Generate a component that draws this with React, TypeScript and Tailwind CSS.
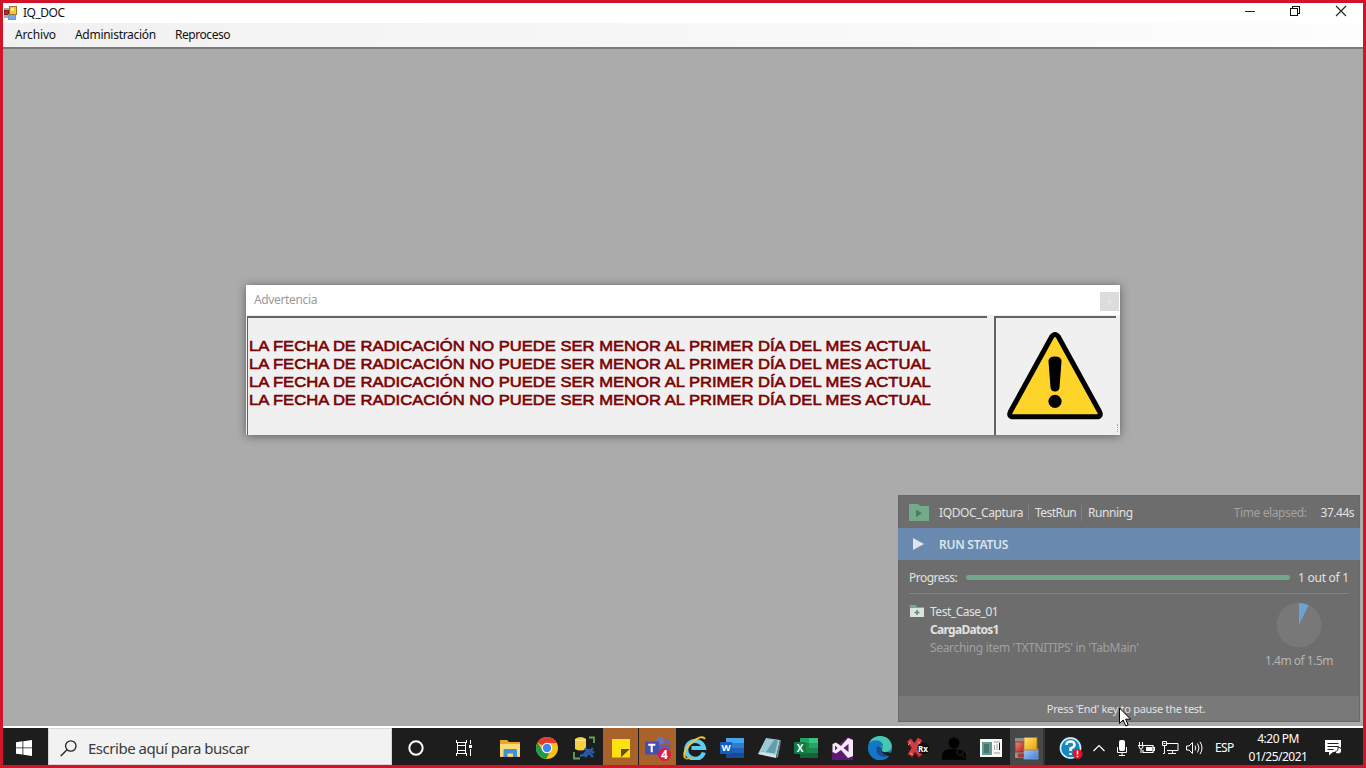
import React from "react";

const warning = "LA FECHA DE RADICACIÓN NO PUEDE SER MENOR AL PRIMER DÍA DEL MES ACTUAL";

function Icon({ children, className = "h-6 w-6" }: { children: React.ReactNode; className?: string }) {
  return (
    <svg viewBox="0 0 24 24" className={`shrink-0 ${className}`} fill="none">
      {children}
    </svg>
  );
}

function AppGlyph({ className }: { className: string }) {
  return (
    <svg viewBox="0 0 24 24" className={`shrink-0 ${className}`}>
      <defs>
        <linearGradient id="gy" x1="0" y1="0" x2="1" y2="1">
          <stop offset="0" stopColor="#ffe373" />
          <stop offset="1" stopColor="#e9a106" />
        </linearGradient>
        <linearGradient id="gr" x1="0" y1="0" x2="1" y2="1">
          <stop offset="0" stopColor="#e98b80" />
          <stop offset="1" stopColor="#b3211d" />
        </linearGradient>
        <linearGradient id="gb" x1="0" y1="0" x2="1" y2="1">
          <stop offset="0" stopColor="#a9cdfb" />
          <stop offset="1" stopColor="#3f7be0" />
        </linearGradient>
      </defs>
      <rect x="0" y="2" width="9" height="20" fill="#8f8f8f" />
      <rect x="0" y="6" width="9" height="10" fill="url(#gr)" stroke="#8c2a25" strokeWidth=".8" />
      <rect x="9" y="13" width="14" height="10" fill="url(#gb)" stroke="#8ba5c9" strokeWidth=".8" />
      <rect x="9" y="1.5" width="13" height="12.5" fill="url(#gy)" stroke="#a87c22" strokeWidth=".8" />
      <rect x="3" y="17.5" width="6" height="4" fill="#b13832" />
    </svg>
  );
}

function TitleBar() {
  return (
    <header className="flex h-5 shrink-0 items-center bg-white">
      <svg viewBox="0 0 14 14" className="h-[14px] w-[14px] shrink-0">
        <rect x="1" y="2" width="5" height="10" fill="#aaa" />
        <rect x="1.5" y="4.5" width="4" height="4" fill="#b92c25" stroke="#7e211d" />
        <rect x="5.5" y="8.500" width="7" height="5" fill="#77a7ee" stroke="#7f95b5" />
        <rect x="6.500" y="0.5" width="7" height="8" fill="#f4c53a" stroke="#9c7a31" />
        <rect x="8" y="2" width="3" height="3" fill="#ffeaa0" />
      </svg>
      <span className="ml-[6px] text-[12px] leading-4 tracking-[-0.5px] text-[#111]">IQ_DOC</span>
      <div className="ml-auto flex items-center gap-[34px] pr-4 pb-[5px]">
        <svg viewBox="0 0 12 12" className="h-3 w-3" fill="none" stroke="#222" shapeRendering="crispEdges">
          <path d="M2 6.5h10" />
        </svg>
        <svg viewBox="0 0 12 12" className="h-3 w-3" fill="none" stroke="#111" shapeRendering="crispEdges">
          <path d="M1.500 3.500h7v7h-7zM3.500 3.500v-2h7v7h-2" />
        </svg>
        <svg viewBox="0 0 12 12" className="h-3 w-3" fill="none" stroke="#222" strokeWidth="1.1">
          <path d="M1 1l10 10M11 1L1 11" />
        </svg>
      </div>
    </header>
  );
}

function MenuBar() {
  return (
    <nav className="flex h-[26px] shrink-0 items-center gap-[19px] border-b-2 border-[#7b7b79] bg-linear-to-r from-[#f1f1f1] to-[#fdfdfd] pl-[12px] text-[12px] leading-4 text-[#111]">
      <span className="tracking-[-0.15px]">Archivo</span>
      <span className="tracking-[-0.28px]">Administración</span>
      <span className="tracking-[-0.45px]">Reproceso</span>
    </nav>
  );
}

function WarningDialog() {
  return (
    <section className="absolute left-[246px] top-[285px] flex h-[150px] w-[874px] flex-col bg-[#f0f0f0] shadow-[0_1px_9px_rgba(0,0,0,0.45)]">
      <div className="flex h-[30px] shrink-0 justify-between bg-white">
        <span className="mt-[7px] ml-2 text-[12px] leading-4 tracking-[-0.35px] text-[#9a9a9a]">Advertencia</span>
        <span className="mt-[7px] mr-px flex h-[19px] w-[19px] items-center justify-center bg-[#dcdcdc] text-[9px] text-[#ececec]">×</span>
      </div>
      <div className="flex min-h-0 flex-1 pl-px pt-px">
        <div className="w-[740px] border-l border-t-2 border-[#636363] pt-[19px] pl-px">
          <div className="w-fit origin-left scale-x-[1.07] font-['Liberation_Sans',sans-serif] text-[15.5px] leading-[18px] whitespace-nowrap text-[#7b0000] [-webkit-text-stroke:0.6px_#7b0000]">
            {[0, 1, 2, 3].map((n) => (
              <p key={n}>{warning}</p>
            ))}
          </div>
        </div>
        <div className="ml-[7px] w-[122px] border-l-2 border-t-2 border-[#636363]">
          <svg viewBox="0 0 120 116" className="h-[116px] w-[120px]">
            <path d="M55.500 19Q59 14 62.500 19L103.500 93.500Q106 98.700 100.500 98.700H17.500Q12 98.700 14.500 93.500Z" fill="#ffd42a" stroke="#000" strokeWidth="5" strokeLinejoin="round" />
            <path d="M52.500 43.500Q52.500 38.500 59 38.500T65.500 43.500L63.500 69.500Q63 73.500 59 73.500T54.500 69.500Z" fill="#000" />
            <circle cx="59" cy="83.300" r="6.600" fill="#000" />
          </svg>
        </div>
        <div className="mb-[3px] ml-px h-2 self-end border-l border-dotted border-[#aaa]" />
      </div>
    </section>
  );
}

function RunPanel() {
  return (
    <section className="absolute left-[898px] top-[495px] flex h-[227px] w-[462px] flex-col border border-[#696969] bg-[#6d6d6d] text-[12px] leading-4 text-[#e2e2e2]">
      <div className="flex h-8 shrink-0 items-center pt-[2px] pr-[5px] pl-[10px]">
        <svg viewBox="0 0 20 17" className="mb-[2px] h-[17px] w-5 shrink-0">
          <path d="M0 0h9l2 2h9v15H0z" fill="#72aa8a" />
          <path d="M7 5.500l6 3.700-6 3.700z" fill="#4d7a60" />
        </svg>
        <span className="ml-[10px] w-[84px] tracking-[-0.4px]">IQDOC_Captura</span>
        <span className="ml-[5px] h-4 w-px bg-[#818181]" />
        <span className="ml-[6px] w-[42px] tracking-[-0.55px]">TestRun</span>
        <span className="ml-[4px] h-4 w-px bg-[#818181]" />
        <span className="ml-[6px] tracking-[-0.42px]">Running</span>
        <span className="ml-auto tracking-[-0.4px] text-[#a2a2a2]">Time elapsed:</span>
        <span className="ml-[14px] tracking-[-0.5px]">37.44s</span>
      </div>
      <div className="-mx-px flex h-8 shrink-0 items-center bg-[#698aae] pl-[15px]">
        <svg viewBox="0 0 11 12" className="h-3 w-[11px]">
          <path d="M0 0l11 6-11 6z" fill="#e0e4e8" />
        </svg>
        <span className="mt-[2px] ml-[15px] font-semibold tracking-[-0.25px] text-[#dce4ec]">RUN STATUS</span>
      </div>
      <div className="mx-[10px] flex h-[34px] shrink-0 items-center border-b border-[#828282] pt-[2px]">
        <span className="tracking-[-0.5px]">Progress:</span>
        <span className="ml-[9px] h-[5px] flex-1 rounded-full bg-[#72a78c]" />
        <span className="ml-2 tracking-[-0.25px]">1 out of 1</span>
      </div>
      <div className="flex min-h-0 flex-1 justify-between pl-[11px]">
        <div className="flex pt-[9px]">
          <svg viewBox="0 0 14 13" className="mt-px h-[13px] w-[14px]">
            <path d="M0 1h6l1 2h7v2H0z" fill="#72ad8c" />
            <path d="M0 4h14v9H0z" fill="#dce3df" />
            <path d="M7 6v5M4.500 8.500h5" stroke="#5b8e70" strokeWidth="1.600" />
          </svg>
          <div className="ml-[6px] leading-[18px]">
            <p className="tracking-[-0.47px]">Test_Case_01</p>
            <p className="font-bold tracking-[-0.7px]">CargaDatos1</p>
            <p className="tracking-[-0.33px] text-[#a0a0a0]">Searching item 'TXTNITIPS' in 'TabMain'</p>
          </div>
        </div>
        <div className="mr-[26px] flex flex-col items-center pt-2">
          <svg viewBox="0 0 46 46" className="h-[46px] w-[46px]">
            <circle cx="23" cy="23" r="22.500" fill="#787878" />
            <path d="M23 23V1a22 22 0 0 1 9.500 2.300z" fill="#6aa3d2" />
          </svg>
          <span className="mt-[5px] tracking-[-0.5px] text-[#b4b4b4]">1.4m of 1.5m</span>
        </div>
      </div>
      <div className="flex h-[25px] shrink-0 items-center justify-center bg-[#797979] pr-[6px] text-[11px] tracking-[-0.29px]">
        Press 'End' key to pause the test.
      </div>
    </section>
  );
}

function Slot({ children, className = "w-[37px]" }: { children: React.ReactNode; className?: string }) {
  return <div className={`flex h-full shrink-0 items-center justify-center pt-[2px] ${className}`}>{children}</div>;
}

const glyph = "font-['Open_Sans',sans-serif] font-bold";

function PinnedApps() {
  return (
    <div className="flex h-full w-[554px] shrink-0">
      <Slot>
        <Icon>
          <path d="M2 4h7l2 2h11v15H2z" fill="#e5a82d" />
          <path d="M2 8h20v12.500H2z" fill="#fbd974" />
          <path d="M5.500 21v-6.500Q5.500 13 7 13h10.500q1.500 0 1.500 1.500V21h-4v-3.500h-5.500V21z" fill="#3d91d8" />
        </Icon>
      </Slot>
      <Slot>
        <Icon>
          <circle cx="12" cy="12" r="11" fill="#fbc116" />
          <path d="M12 12L2.500 6.500A11 11 0 0 1 21.500 6.500L22 7H12z" fill="#e33b2e" />
          <path d="M2.500 6.500A11 11 0 0 0 11 23l5-9-8 1z" fill="#229a4c" />
          <circle cx="12" cy="12" r="5.300" fill="#fff" />
          <circle cx="12" cy="12" r="4.200" fill="#4286f5" />
        </Icon>
      </Slot>
      <Slot>
        <Icon>
          <path d="M3 3Q8.500-1 14 3v10Q8.500 16 3 13z" fill="#f7cf43" />
          <path d="M3 3.500q5.500 2.500 11 0" stroke="#fff0a1" />
          <path d="M17 1.500h5V7M2 16v6.500h6" stroke="#62a45c" strokeWidth="1.800" />
          <path d="M8 19.500q4 .5 6-3.500t8 1M13 12l8 9M21 12l-8 9" stroke="#245caa" strokeWidth="2.600" />
        </Icon>
      </Slot>
      <Slot className="w-[37px] border-r border-l border-[#1d1d1d] bg-[#a9622a]">
        <Icon>
          <path d="M3 3h18v10l-9 8.500H3z" fill="#ffe013" />
          <path d="M12 21.500V13h9z" fill="#635018" />
          <path d="M21 13v8.500h-9z" fill="#ffe013" />
        </Icon>
      </Slot>
      <Slot className="w-[37px] bg-[#a9622a]">
        <Icon className="h-[26px] w-[26px]">
          <circle cx="14" cy="5" r="3.500" fill="#6870c8" />
          <circle cx="20.500" cy="6" r="2.500" fill="#5f66b8" />
          <path d="M10 9h13v7q-1 5-7 5-5 0-6-5z" fill="#5a61b4" />
          <rect x="0" y="6" width="13" height="12" rx="1" fill="#4350ad" />
          <path d="M3 9h6.500M6.200 9v7" stroke="#fff" strokeWidth="1.900" />
          <circle cx="18" cy="18" r="6" fill="#d91c42" />
          <text x="18" y="22" textAnchor="middle" fontSize="11" fill="#fff" className={glyph}>4</text>
        </Icon>
      </Slot>
      <Slot>
        <Icon>
          <path d="M20.800 16.500A9 9 0 1 1 21 12H8.500" stroke="#5fcaf4" strokeWidth="4.200" />
          <path d="M2 22Q-1 15 9 6.500T22 3" stroke="#f7c526" strokeWidth="2" />
          <path d="M2 22q3 2 8-1.500" stroke="#e8a91c" strokeWidth="1.500" />
        </Icon>
      </Slot>
      <Slot>
        <Icon>
          <rect x="6" y="2" width="18" height="20" rx="1" fill="#2b7cd3" />
          <path d="M6 2h18v5H6z" fill="#43a6ee" />
          <path d="M6 12h18v5H6z" fill="#1b62b8" />
          <path d="M6 17h18v5H6z" fill="#174b97" />
          <rect x="0" y="6" width="12" height="12" rx="1" fill="#185abd" />
          <text x="6" y="15.300" textAnchor="middle" fontSize="9.500" fill="#fff" className={glyph}>W</text>
        </Icon>
      </Slot>
      <Slot>
        <Icon>
          <path d="M9 2l14 2-4 17-18-3z" fill="#a9d2dc" />
          <path d="M10 3l11 1.500-3 13-14-2z" fill="#629fae" />
          <path d="M10 3l7 1-8 12-5-.5z" fill="#9bcbd6" />
          <path d="M1 18l4-2 14 3v3z" fill="#d6e1e3" />
          <path d="M23 4l-4 18 2-1 3-16z" fill="#72858c" />
        </Icon>
      </Slot>
      <Slot>
        <Icon>
          <rect x="6" y="2" width="18" height="20" rx="1" fill="#18884d" />
          <path d="M6 2h9v5H6zM15 7h9v5h-9z" fill="#22a565" />
          <path d="M15 2h9v5h-9z" fill="#3bc481" />
          <path d="M6 17h18v5H6z" fill="#17613a" />
          <rect x="0" y="6" width="12" height="12" rx="1" fill="#0f7b41" />
          <text x="6" y="15.500" textAnchor="middle" fontSize="10" fill="#fff" className={glyph}>X</text>
        </Icon>
      </Slot>
      <Slot>
        <Icon>
          <path d="M1 14l16-13 5 2v21H1z" fill="#5c1a73" />
          <path d="M1.500 8l3.500-1.500 5 3.500L17 2l5 2v16L17 22l-7-8-5 3.500L1.500 16z" fill="#f3eaf5" />
          <path d="M4 9.500v5L6.500 12zM17.500 8v8l-5-4z" fill="#5c1a73" />
        </Icon>
      </Slot>
      <Slot>
        <Icon>
          <circle cx="12" cy="12" r="12" fill="#1782d1" />
          <path d="M1 8C3-1 17-3 22 5c5 8-2 12-7 11-4-1-1-3-2-6Q10 4 1 8z" fill="#45c9ae" />
          <path d="M1 7.500C5 2 15 4 15 10H9q-4 4 0 8t13 0q-4 7-12 6T0 12z" fill="#1676c6" />
          <path d="M9 10q-3 7 3 10t10-2q-8 2-9-4 2-3-4-4z" fill="#164f98" />
          <path d="M14 10q1 2-.5 4 1 3 6 2l5 1-1 3q-8 0-10.500-5z" fill="#1d1d1d" />
        </Icon>
      </Slot>
      <Slot>
        <Icon>
          <path d="M4 5l12 15M15 3L5 20" stroke="#8b1a1e" strokeWidth="6" />
          <path d="M4 4l12 15M15 3L5 19" stroke="#cf3f42" strokeWidth="4.500" />
          <path d="M3 9l3-3M13 6l3 2M5 17l3 2" stroke="#f4a19b" />
          <rect x="12.500" y="7" width="11.500" height="11" rx="5" fill="#090909" />
          <text x="18" y="15.500" textAnchor="middle" fontSize="8" fill="#fff" className={glyph}>Rx</text>
        </Icon>
      </Slot>
      <Slot>
        <Icon>
          <circle cx="12" cy="7" r="5.500" fill="#020202" />
          <path d="M0 24v-5q1-5 7-6h10q6 1 7 6v5z" fill="#020202" />
          <circle cx="18" cy="16" r="3.200" stroke="#242424" />
          <path d="M20 19l3 3" stroke="#242424" />
        </Icon>
      </Slot>
      <Slot>
        <Icon>
          <rect x="1" y="3" width="22" height="18" fill="#f7f7f7" />
          <rect x="3" y="6" width="10" height="13" fill="#639a91" />
          <rect x="5" y="8" width="5" height="9" fill="#46766d" />
          <path d="M15 6h6M15 17h6" stroke="#999" />
          <path d="M15.500 9v5M18 8v6" stroke="#aaa" />
          <path d="M20.500 7v7" stroke="#222" />
        </Icon>
      </Slot>
      <Slot className="ml-px w-[35px] border-r-2 border-[#343434] bg-[#474747]">
        <AppGlyph className="h-6 w-6" />
      </Slot>
    </div>
  );
}

function Tray() {
  return (
    <div className="flex h-full flex-1 items-center pt-[2px] text-white">
      <Icon className="ml-[14px] h-6 w-6">
        <circle cx="11.500" cy="12" r="11" fill="#1689bf" />
        <circle cx="11.500" cy="12" r="10" stroke="#d6f1fb" strokeWidth="1.500" />
        <path d="M7.500 9Q7.500 5.500 11.500 5.500T15.500 9Q15.500 11 11.500 12.500V15M11.500 17v2" stroke="#fff" strokeWidth="2.500" />
        <circle cx="18.500" cy="18" r="5" fill="#e31123" />
        <path d="M18.500 14.500v4M18.500 19.700v1.500" stroke="#fff" strokeWidth="1.500" />
      </Icon>
      <svg viewBox="0 0 12 8" className="ml-[10px] h-2 w-3 shrink-0" fill="none" stroke="#fff" strokeWidth="1.200">
        <path d="M.5 7L6 1.500 11.500 7" />
      </svg>
      <svg viewBox="0 0 12 16" className="ml-[11px] h-4 w-3 shrink-0" fill="none" stroke="#fff">
        <rect x="3" y="0" width="6" height="11" rx="2" fill="#fff" stroke="none" />
        <path d="M1.500 7v5.500h9V7M6 12.500V15M3 15.500h6" />
      </svg>
      <svg viewBox="0 0 17 12" className="ml-[10px] h-3 w-[17px] shrink-0" fill="none" stroke="#fff">
        <path d="M6 3.500h9v7H5V8M15 5.500h1.500v3H15" strokeWidth="1.200" />
        <path d="M8 5h6v4H8z" fill="#fff" stroke="none" />
        <path d="M1.500 0v3M4.500 0v3M0 3.500h6M1 4q0 3 2 3t2-3M3 7v4" />
      </svg>
      <svg viewBox="0 0 17 15" className="ml-[7px] h-[15px] w-[17px] shrink-0" fill="none" stroke="#fff">
        <path d="M5 3.500h11v7H5M10.500 10.500v3M6 13.500h8M.5 1.500h4v4h-4zM2.500 5.500v8H1M1.500 3.500h2" />
      </svg>
      <svg viewBox="0 0 17 14" className="ml-[7px] h-[14px] w-[17px] shrink-0" fill="none" stroke="#fff">
        <path d="M.5 5h2.500L6.500 1.500v11L3 9H.5zM9 4.500q1.500 2.500 0 5M11.500 2.500q3 4.500 0 9M14 .8q4 6.200 0 12.400" />
      </svg>
      <span className="ml-[12px] w-5 text-[12px] tracking-[-0.6px]">ESP</span>
      <div className="ml-[13px] w-[60px] text-center text-[12px] leading-[18px] tracking-[-0.5px] whitespace-nowrap">
        <p>4:20 PM</p>
        <p>01/25/2021</p>
      </div>
      <svg viewBox="0 0 18 17" className="ml-[17px] h-[17px] w-[18px] shrink-0" fill="none">
        <path d="M0 1h16v12H8l-4 3.500V13H0z" fill="#fff" />
        <path d="M2.500 4.500h11M2.500 7.500h11M2.500 10.500h6" stroke="#1d1d1d" />
        <path d="M10 13a3.500 3.500 0 1 0 3-5 4 4 0 0 1-3 5z" fill="#fff" stroke="#1d1d1d" />
      </svg>
    </div>
  );
}

function Taskbar() {
  return (
    <footer className="flex h-[39px] shrink-0 items-center border-t-2 border-white bg-[#1d1d1d]">
      <div className="flex h-full w-[45px] shrink-0 items-center justify-center pt-[2px] pr-[3px]">
        <svg viewBox="0 0 16 16" className="h-4 w-4" fill="#fff">
          <path d="M0 2.200l6.500-.9v6.200H0zM7.300 1.200L16 0v7.500H7.300zM0 8.300h6.500v6.300L0 13.700zM7.300 8.300H16V16l-8.700-1.200z" />
        </svg>
      </div>
      <div className="flex h-full w-[344px] shrink-0 items-center border border-[#d5d5d5] bg-[#f2f2f2] pt-[3px] pl-[11px]">
        <svg viewBox="0 0 17 17" className="h-[17px] w-[17px]" fill="none" stroke="#222" strokeWidth="1.300">
          <circle cx="10.800" cy="6" r="5.200" />
          <path d="M7 9.800L.8 16" />
        </svg>
        <span className="ml-[11px] text-[15px] leading-5 tracking-[-0.48px] text-[#3a3a3a]">Escribe aquí para buscar</span>
      </div>
      <div className="flex h-full w-12 shrink-0 items-center justify-center pt-[2px]">
        <Icon className="h-4 w-4">
          <circle cx="12" cy="12" r="10" stroke="#fff" strokeWidth="3" />
        </Icon>
      </div>
      <div className="flex h-full w-[51px] shrink-0 items-center justify-center pt-[3px] pr-[3px]">
        <svg viewBox="0 0 16 16" className="h-4 w-4" fill="none" stroke="#fff" shapeRendering="crispEdges">
          <path d="M.5 0v2.500h10V0M.5 16v-2.500h10V16M1.500 5.500h8v5h-8zM1.500 2v3M9.500 2v3M1.500 11v3M9.500 11v3M14.500 0v4M14.500 9v7" />
          <path d="M13 5h3v3h-3z" fill="#fff" stroke="none" />
        </svg>
      </div>
      <PinnedApps />
      <Tray />
    </footer>
  );
}

export default function App() {
  return (
    <div className="relative flex h-[768px] w-[1366px] flex-col overflow-hidden border-[3px] border-[#d2142b] bg-[#ababab] font-['Noto_Sans','Open_Sans',sans-serif]">
      <TitleBar />
      <MenuBar />
      <main className="flex-1 bg-[#ababab]" />
      <Taskbar />
      <div className="absolute -left-[3px] -top-[3px]">
        <WarningDialog />
        <RunPanel />
        <svg viewBox="0 0 12 20" className="absolute left-[1119px] top-[707px] h-5 w-3">
          <path d="M.5 1v15.500l3.700-3.500 2.600 6 2.400-1-2.600-5.800h5z" fill="#fff" stroke="#000" />
        </svg>
      </div>
    </div>
  );
}
